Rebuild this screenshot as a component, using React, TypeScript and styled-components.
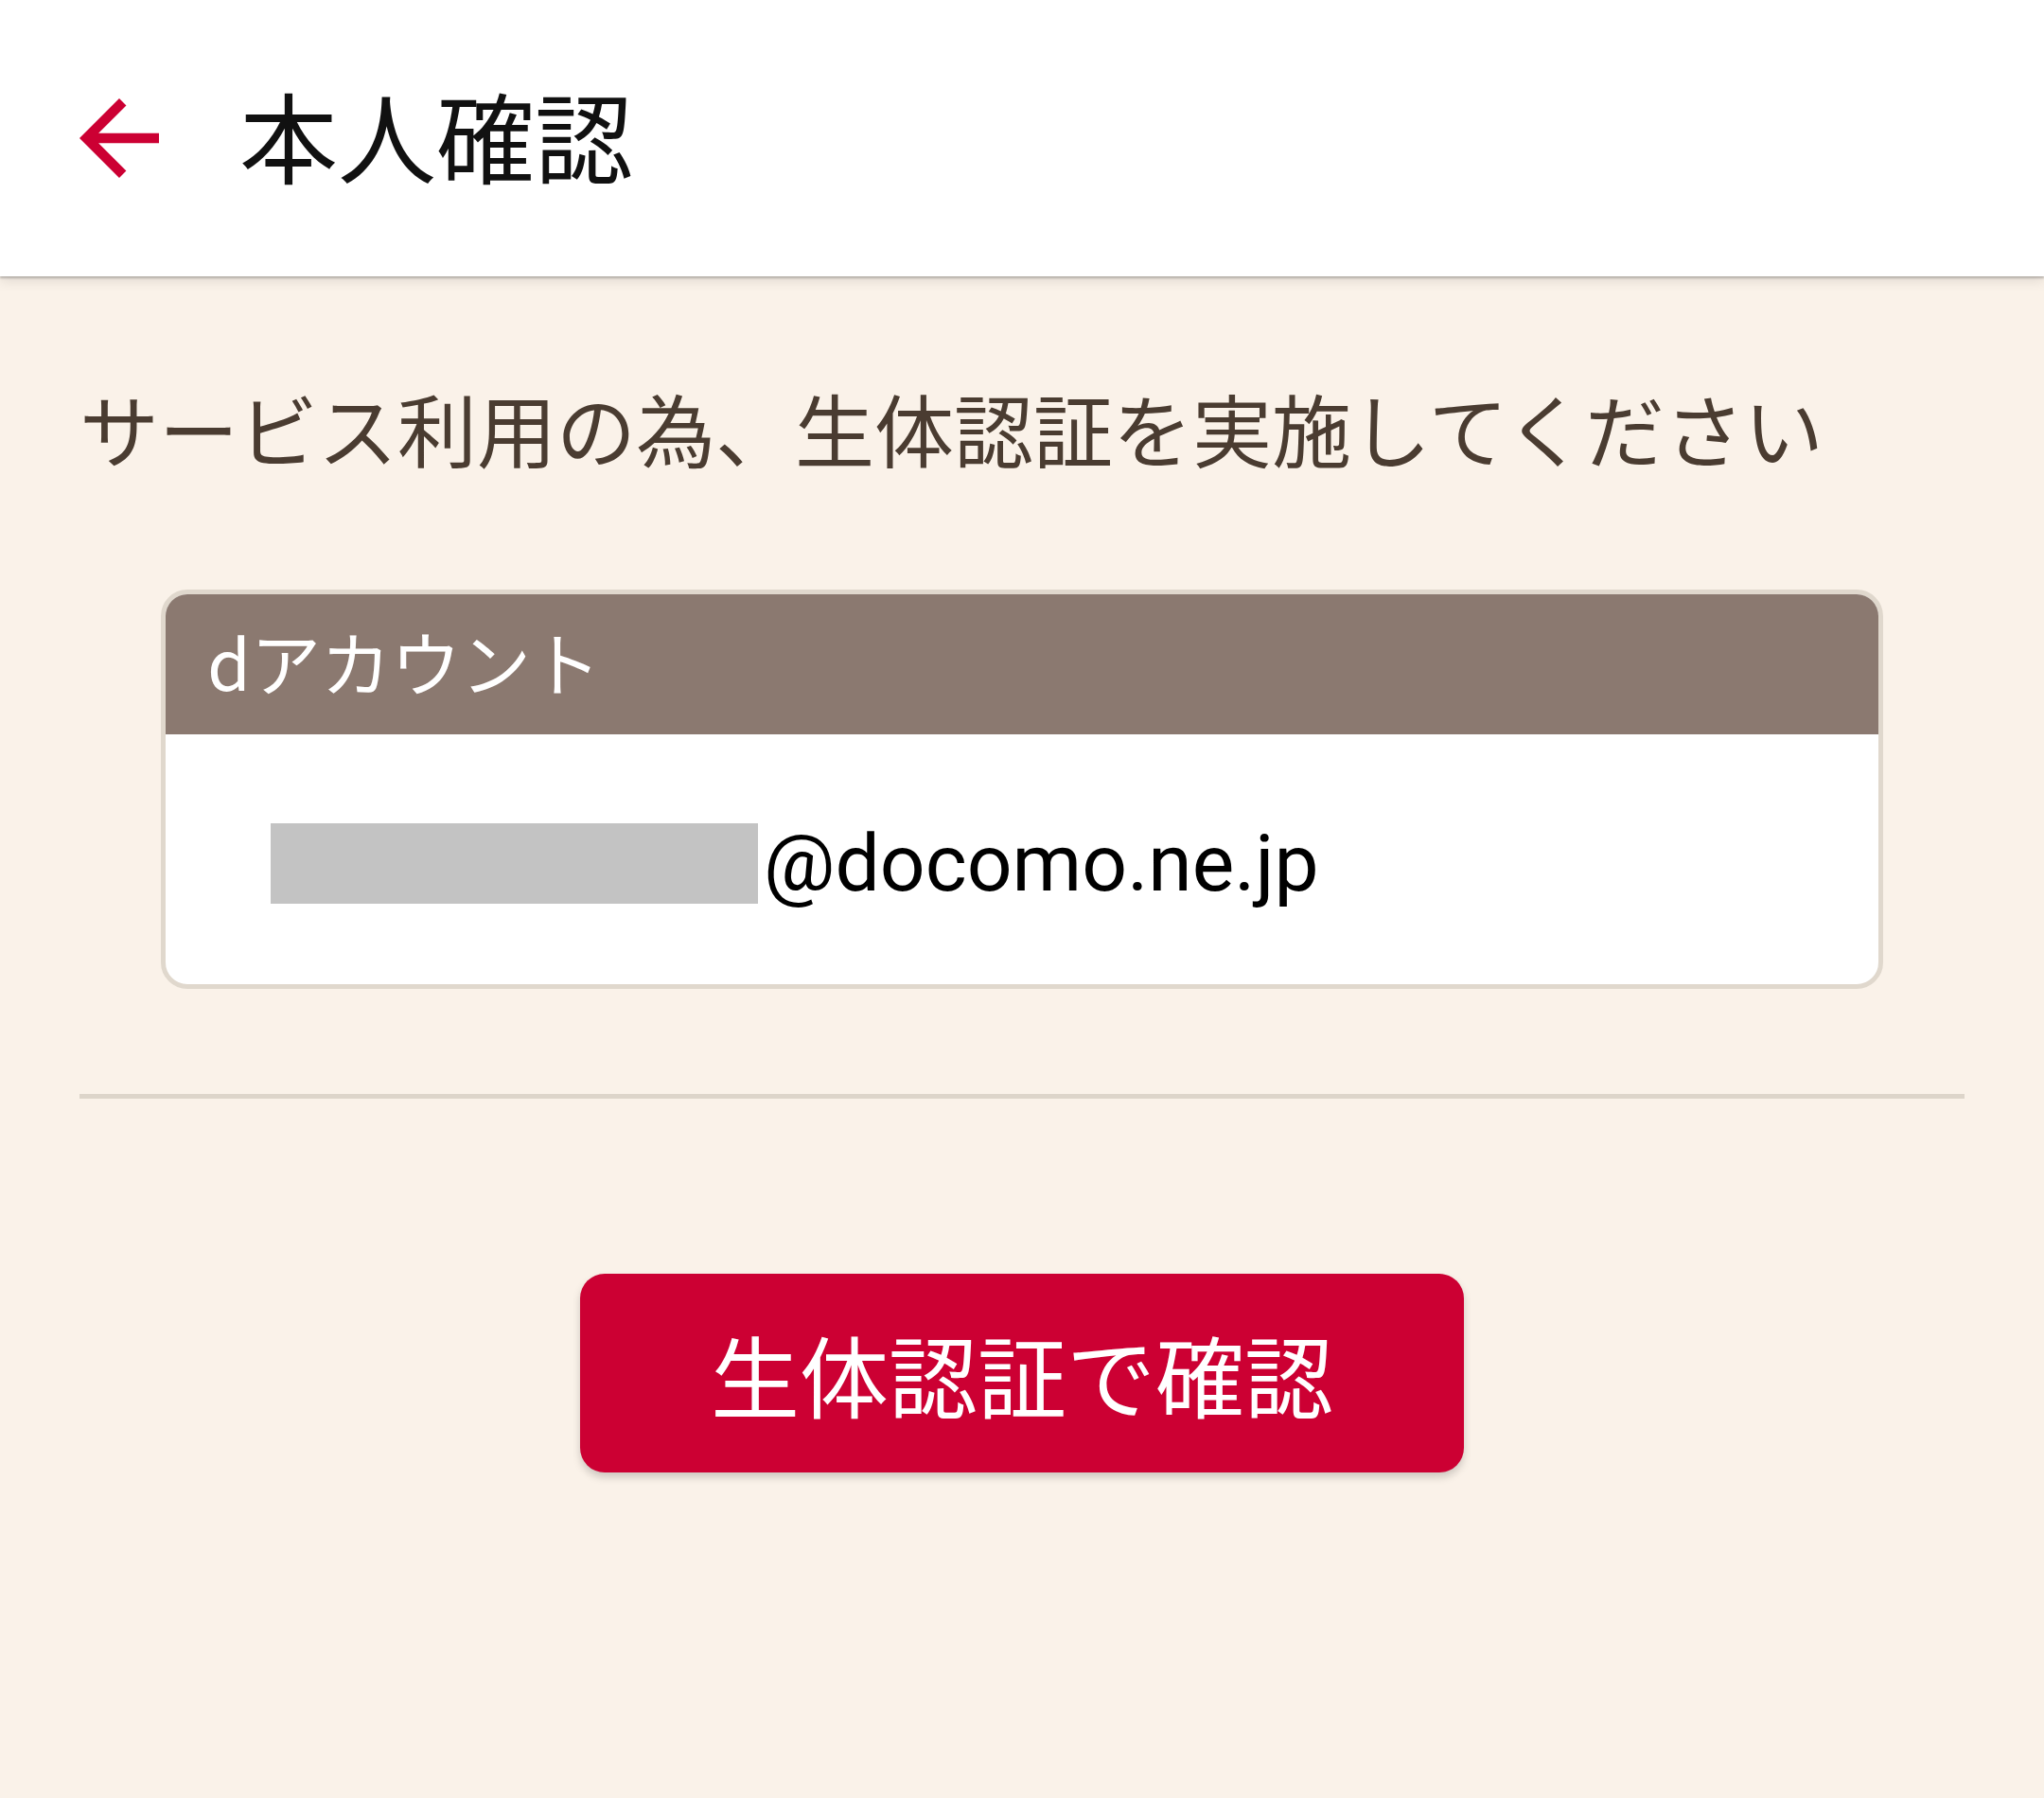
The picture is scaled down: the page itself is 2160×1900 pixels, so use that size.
import React from 'react';
import styled, { createGlobalStyle } from 'styled-components';

const GlobalStyle = createGlobalStyle`
  html, body {
    margin: 0;
    padding: 0;
    background: #faf2e9;
  }
  body {
    font-family: "Noto Sans CJK JP", "Noto Sans", sans-serif;
    -webkit-font-smoothing: antialiased;
  }
`;

const BackArrow = () => (
  <svg width="126" height="126" viewBox="0 0 24 24" fill="#cc0033">
    <path d="M20 11H7.83l5.59-5.59L12 4l-8 8 8 8 1.41-1.41L7.83 13H20v-2z" />
  </svg>
);

const App: React.FC = () => {
  return (
    <Page>
      <GlobalStyle />
      <Header>
        <BackButton aria-label="戻る">
          <BackArrow />
        </BackButton>
        <Title>本人確認</Title>
      </Header>
      <Content>
        <Lead>サービス利用の為、生体認証を実施してください</Lead>
        <AccountCard>
          <CardHead>dアカウント</CardHead>
          <CardBody>
            <Masked />
            <Domain>@docomo.ne.jp</Domain>
          </CardBody>
        </AccountCard>
        <Divider />
        <ButtonRow>
          <ConfirmButton>生体認証で確認</ConfirmButton>
        </ButtonRow>
      </Content>
    </Page>
  );
};

export default App;

const Page = styled.div`
  min-height: 1900px;
  background: #faf2e9;
`;

const Header = styled.header`
  position: relative;
  z-index: 1;
  height: 292px;
  display: flex;
  align-items: center;
  padding-left: 63px;
  background: #ffffff;
  box-shadow:
    0 2px 2px rgba(0, 0, 0, 0.22),
    0 5px 12px rgba(0, 0, 0, 0.1);
`;

const BackButton = styled.button`
  display: flex;
  padding: 0;
  border: none;
  background: none;
  width: 126px;
  height: 126px;
`;

const Title = styled.h1`
  margin: 0 0 8px 64px;
  font-size: 104px;
  font-weight: 400;
  line-height: 1;
  color: #111111;
`;

const Content = styled.main`
  display: flex;
  flex-direction: column;
  padding: 0 84px;
`;

const Lead = styled.p`
  margin: 110px 0 0;
  font-size: 84px;
  line-height: 100px;
  color: #4a3c31;
  white-space: nowrap;
`;

const AccountCard = styled.section`
  margin: 121px 86px 0;
  border: 5px solid #e0d8cd;
  border-radius: 28px;
  background: #ffffff;
  overflow: hidden;
`;

const CardHead = styled.div`
  height: 148px;
  box-sizing: border-box;
  padding: 0 0 10px 44px;
  display: flex;
  align-items: center;
  background: #8b7970;
  color: #ffffff;
  font-size: 74px;
`;

const CardBody = styled.div`
  height: 264px;
  box-sizing: border-box;
  padding: 8px 0 0 111px;
  display: flex;
  align-items: center;
`;

const Masked = styled.span`
  width: 515px;
  height: 85px;
  background: #c3c3c3;
`;

const Domain = styled.span`
  margin-left: 6px;
  font-family: Roboto, "Noto Sans", sans-serif;
  font-size: 84px;
  color: #000000;
`;

const Divider = styled.hr`
  margin: 111px 0 0;
  border: none;
  height: 5px;
  background: #ddd5ca;
`;

const ButtonRow = styled.div`
  display: flex;
  justify-content: center;
  margin-top: 185px;
`;

const ConfirmButton = styled.button`
  width: 934px;
  height: 210px;
  border: none;
  border-radius: 26px;
  background: #cc0033;
  color: #ffffff;
  font-family: "Noto Sans CJK JP", "Noto Sans", sans-serif;
  font-size: 94px;
  box-shadow: 0 5px 8px rgba(0, 0, 0, 0.18);
`;
